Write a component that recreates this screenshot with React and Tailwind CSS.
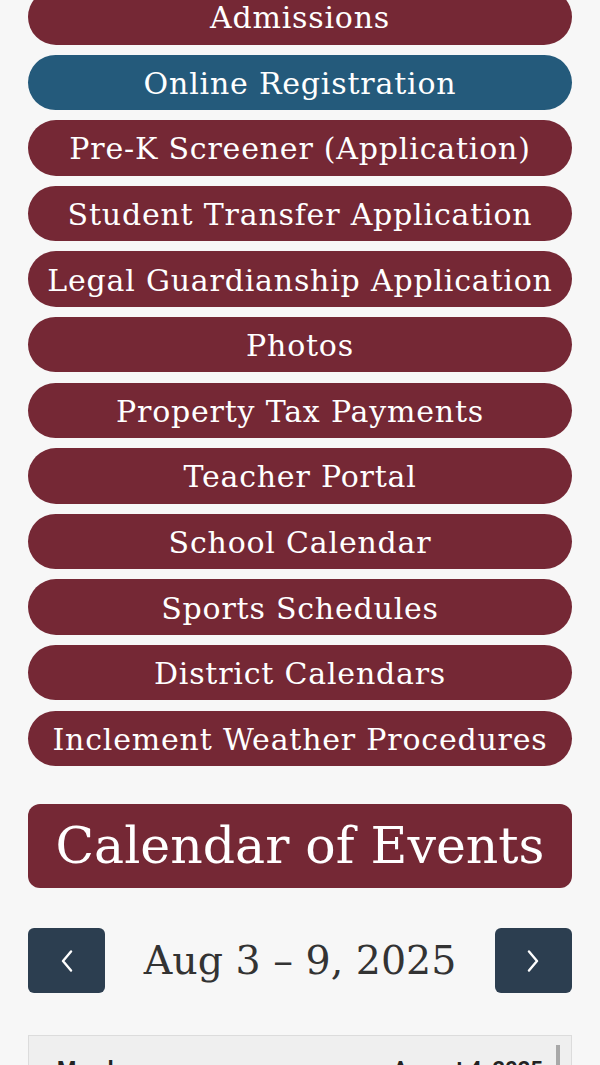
const links = [
  { label: 'Admissions' },
  { label: 'Online Registration', active: true },
  { label: 'Pre-K Screener (Application)' },
  { label: 'Student Transfer Application' },
  { label: 'Legal Guardianship Application' },
  { label: 'Photos' },
  { label: 'Property Tax Payments' },
  { label: 'Teacher Portal' },
  { label: 'School Calendar' },
  { label: 'Sports Schedules' },
  { label: 'District Calendars' },
  { label: 'Inclement Weather Procedures' },
];

const slab = "font-['DejaVu_Serif','Liberation_Serif',serif]";

const Chevron = ({ dir }) => (
  <svg width="12" height="22" viewBox="0 0 12 22" fill="none" stroke="currentColor" strokeWidth={2.4} strokeLinecap="round" strokeLinejoin="round">
    {dir === 'left' ? (
      <polyline points="10,1.5 2,11 10,20.5" />
    ) : (
      <polyline points="2,1.5 10,11 2,20.5" />
    )}
  </svg>
);

const App = () => {
  return (
    <div className="min-h-[1065px] bg-[#f7f7f7] overflow-hidden">
      <div className="px-[28px]">
        {/* Quick links */}
        <div className="flex flex-col gap-[10.1px] -mt-[11px]">
          {links.map((link) => (
            <a
              key={link.label}
              href="#"
              className={`h-[55.5px] pt-[2px] rounded-full flex items-center justify-center text-white text-[30px] tracking-[0.8px] whitespace-nowrap ${slab} ${
                link.active ? 'bg-[#245a7b]' : 'bg-[#752835]'
              }`}
            >
              {link.label}
            </a>
          ))}
        </div>

        {/* Calendar */}
        <div className="mt-[38px] h-[84px] rounded-[12px] bg-[#752835] flex items-center justify-center">
          <h2 className={`text-white text-[50.5px] font-light ${slab}`}>Calendar of Events</h2>
        </div>

        <div className="mt-[40px] flex items-center justify-between">
          <button className="w-[77px] h-[65px] rounded-[6px] bg-[#2c3e50] flex items-center justify-center text-white">
            <Chevron dir="left" />
          </button>
          <div className={`text-[#333] text-[39.5px] font-light ${slab}`}>Aug 3 – 9, 2025</div>
          <button className="w-[77px] h-[65px] rounded-[6px] bg-[#2c3e50] flex items-center justify-center text-white">
            <Chevron dir="right" />
          </button>
        </div>

        <div className="mt-[42px] border border-[#dcdcdc] bg-[#efefef] h-[60px] relative">
          <div className="flex justify-between pl-[28px] pr-[28px] pt-[17px] font-['Roboto',sans-serif] text-[22px] font-bold text-[#222]">
            <span>Monday</span>
            <span>August 4, 2025</span>
          </div>
          <div className="absolute right-[11px] top-[9px] w-[4px] h-[60px] bg-[#a8a8a8]"></div>
        </div>
      </div>
    </div>
  );
};

export default App;
